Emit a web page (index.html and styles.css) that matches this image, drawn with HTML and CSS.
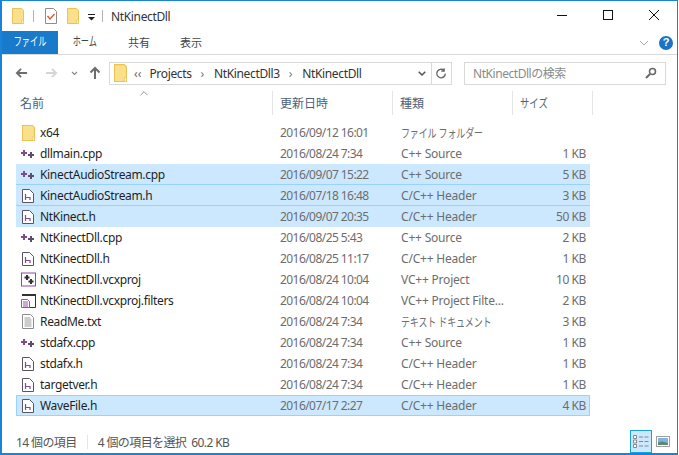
FILE: index.html
```html
<!DOCTYPE html>
<html lang="ja">
<head>
<meta charset="utf-8">
<title>NtKinectDll</title>
<link rel="stylesheet" href="styles.css">
</head>
<body>
<svg class="defs" width="0" height="0">
  <symbol id="folder" viewBox="0 0 12 16" preserveAspectRatio="none"><path d="M.5.5h9l2 2v13H.5z" fill="#fbe08c" stroke="#e8c458"/><path d="M9.500 12h2v3.500h-2z" fill="#fff3c4" stroke="#e8c458" stroke-width=".7"/></symbol>
  <symbol id="cpp" viewBox="0 0 14 10"><path d="M3 1v6M0 4h6" stroke="#7d4a94" stroke-width="2" fill="none"/><path d="M10 3v6M7 6h6" stroke="#5f4a70" stroke-width="2" fill="none"/></symbol>
  <symbol id="hdr" viewBox="0 0 12 14"><path d="M.5.500h7l4 4v9H.5z" fill="#fff" stroke="#5a5560"/><path d="M3.500 5v6M3.500 8.500h4.500v2.500" fill="none" stroke="#7d4a94" stroke-width="1.200"/></symbol>
  <symbol id="proj" viewBox="0 0 15 14"><rect x=".5" y=".5" width="14" height="13" fill="#fff" stroke="#8f4a9e"/><path d="M6 2.500v5M3.500 5h5" stroke="#333" stroke-width="2"/><path d="M10 6.500v5M7.500 9h5" stroke="#333" stroke-width="2"/></symbol>
  <symbol id="filt" viewBox="0 0 15 15"><path d="M1 1.500h13.500v13H6" fill="#fff" stroke="#333"/><path d="M1 1h14v2H1z" fill="#333"/><path d="M.5 6.500h6l2 2v6H.5z" fill="#fff" stroke="#9b4fa8"/><path d="M2 9h5M2 11h5M2 13h5" stroke="#9b4fa8"/></symbol>
  <symbol id="txt" viewBox="0 0 12 15"><path d="M.5.500h8l3 3v11H.5z" fill="#fff" stroke="#8c8c8c"/><path d="M2.500 4h6M2.500 6h7M2.500 8h7M2.500 10h7M2.500 12h7" stroke="#9a9a9a"/></symbol>
</svg>
<div class="window">
  <header class="titlebar">
    <svg class="qa-folder"><use href="#folder"/></svg>
    <span class="qa-sep first"></span>
    <svg class="qa-check" viewBox="0 0 12 16"><path d="M.5.500h8l3 3v12H.5z" fill="#fff" stroke="#8c8c8c"/><path d="M2.500 8l2.500 3 4.500-5" fill="none" stroke="#e2582a" stroke-width="1.400"/></svg>
    <svg class="qa-folder second"><use href="#folder"/></svg>
    <svg class="qa-down" viewBox="0 0 9 7"><path d="M1 .5h7" stroke="#222"/><path d="M1 3h7L4.500 6.500z" fill="#222"/></svg>
    <span class="qa-sep"></span>
    <span class="title">NtKinectDll</span>
    <span class="controls">
      <svg class="ctl" viewBox="0 0 46 20"><path d="M18 10.500h10" stroke="#111"/></svg>
      <svg class="ctl" viewBox="0 0 46 20"><rect x="18.500" y="5.500" width="9" height="9" fill="none" stroke="#111"/></svg>
      <svg class="ctl" viewBox="0 0 46 20"><path d="M18 5l10 10M28 5L18 15" stroke="#111"/></svg>
    </span>
  </header>
  <nav class="ribbon">
    <span class="tab t1 active"><span class="kana">ファイル</span></span>
    <span class="tab t2"><span class="kana">ホーム</span></span>
    <span class="tab t3">共有</span>
    <span class="tab t4">表示</span>
    <span class="ribbon-right">
      <svg class="rib-chev" viewBox="0 0 10 6"><path d="M1 1l4 4 4-4" fill="none" stroke="#a8a8a8"/></svg>
      <span class="help">?</span>
    </span>
  </nav>
  <div class="addressbar">
    <svg class="nav-btn" viewBox="0 0 14 12"><path d="M13 6H2M6.500 1.500L2 6l4.500 4.500" fill="none" stroke="#6d6d6d" stroke-width="2"/></svg>
    <svg class="nav-btn fwd" viewBox="0 0 14 12"><path d="M1 6h11M7.500 1.500L12 6l-4.500 4.500" fill="none" stroke="#d5d5d5" stroke-width="2"/></svg>
    <svg class="nav-chev" viewBox="0 0 7 5"><path d="M1 1l2.500 2.500L6 1" fill="none" stroke="#8a8a8a" stroke-width="1.200"/></svg>
    <svg class="nav-up" viewBox="0 0 12 14"><path d="M6 13V2M1.500 6.500L6 2l4.500 4.500" fill="none" stroke="#6d6d6d" stroke-width="2"/></svg>
    <div class="path">
      <svg class="path-folder"><use href="#folder"/></svg>
      <span class="crumb overflow">‹‹</span>
      <span class="crumb">Projects</span><span class="arrow">›</span>
      <span class="crumb">NtKinectDll3</span><span class="arrow">›</span>
      <span class="crumb">NtKinectDll</span>
      <span class="path-end">
        <svg class="path-chev" viewBox="0 0 8 5"><path d="M.7.700L4 4l3.300-3.300" fill="none" stroke="#555" stroke-width="1.500"/></svg>
        <svg class="refresh" viewBox="0 0 20 21"><path d="M14 10.500a4.500 4.500 0 1 1-1.500-3.300M12.800 5v3h-3" fill="none" stroke="#666" stroke-width="1.400"/></svg>
      </span>
    </div>
    <div class="search">
      <span>NtKinectDllの検索</span>
      <svg class="search-icon" viewBox="0 0 12 12"><circle cx="7.500" cy="4.500" r="3" fill="none" stroke="#666" stroke-width="1.500"/><path d="M5 7l-4 4" stroke="#666" stroke-width="2"/></svg>
    </div>
  </div>
  <div class="columns">
    <span class="col col-name">名前<svg class="sort" viewBox="0 0 9 5"><path d="M.5 4.500l4-4 4 4" fill="none" stroke="#888"/></svg></span>
    <span class="col col-date">更新日時</span>
    <span class="col col-type">種類</span>
    <span class="col col-size"><span class="kana left wide">サイズ</span></span>
  </div>
  <main class="list">
    <div class="row"><svg class="ic folder"><use href="#folder"/></svg><span class="nm">x64</span><span class="dt">2016/09/12 16:01</span><span class="ty"><span class="kana left">ファイル フォルダー</span></span><span class="sz"></span></div>
    <div class="row"><svg class="ic cpp"><use href="#cpp"/></svg><span class="nm">dllmain.cpp</span><span class="dt">2016/08/24 7:34</span><span class="ty">C++ Source</span><span class="sz">1 KB</span></div>
    <div class="row sel line"><svg class="ic cpp"><use href="#cpp"/></svg><span class="nm">KinectAudioStream.cpp</span><span class="dt">2016/09/07 15:22</span><span class="ty">C++ Source</span><span class="sz">5 KB</span></div>
    <div class="row sel line"><svg class="ic hdr"><use href="#hdr"/></svg><span class="nm">KinectAudioStream.h</span><span class="dt">2016/07/18 16:48</span><span class="ty">C/C++ Header</span><span class="sz">3 KB</span></div>
    <div class="row sel"><svg class="ic hdr"><use href="#hdr"/></svg><span class="nm">NtKinect.h</span><span class="dt">2016/09/07 20:35</span><span class="ty">C/C++ Header</span><span class="sz">50 KB</span></div>
    <div class="row"><svg class="ic cpp"><use href="#cpp"/></svg><span class="nm">NtKinectDll.cpp</span><span class="dt">2016/08/25 5:43</span><span class="ty">C++ Source</span><span class="sz">2 KB</span></div>
    <div class="row"><svg class="ic hdr"><use href="#hdr"/></svg><span class="nm">NtKinectDll.h</span><span class="dt">2016/08/25 11:17</span><span class="ty">C/C++ Header</span><span class="sz">1 KB</span></div>
    <div class="row"><svg class="ic proj"><use href="#proj"/></svg><span class="nm">NtKinectDll.vcxproj</span><span class="dt">2016/08/24 10:04</span><span class="ty">VC++ Project</span><span class="sz">10 KB</span></div>
    <div class="row"><svg class="ic proj"><use href="#filt"/></svg><span class="nm">NtKinectDll.vcxproj.filters</span><span class="dt">2016/08/24 10:04</span><span class="ty">VC++ Project Filte...</span><span class="sz">2 KB</span></div>
    <div class="row"><svg class="ic txt"><use href="#txt"/></svg><span class="nm">ReadMe.txt</span><span class="dt">2016/08/24 7:34</span><span class="ty"><span class="kana left">テキスト ドキュメント</span></span><span class="sz">3 KB</span></div>
    <div class="row"><svg class="ic cpp"><use href="#cpp"/></svg><span class="nm">stdafx.cpp</span><span class="dt">2016/08/24 7:34</span><span class="ty">C++ Source</span><span class="sz">1 KB</span></div>
    <div class="row"><svg class="ic hdr"><use href="#hdr"/></svg><span class="nm">stdafx.h</span><span class="dt">2016/08/24 7:34</span><span class="ty">C/C++ Header</span><span class="sz">1 KB</span></div>
    <div class="row"><svg class="ic hdr"><use href="#hdr"/></svg><span class="nm">targetver.h</span><span class="dt">2016/08/24 7:34</span><span class="ty">C/C++ Header</span><span class="sz">1 KB</span></div>
    <div class="row sel last"><svg class="ic hdr"><use href="#hdr"/></svg><span class="nm">WaveFile.h</span><span class="dt">2016/07/17 2:27</span><span class="ty">C/C++ Header</span><span class="sz">4 KB</span></div>
  </main>
  <footer class="status">
    <span class="st-count">14 個の項目</span>
    <span class="st-sep"></span>
    <span>4 個の項目を選択&nbsp; 60.2 KB</span>
    <span class="views">
      <span class="view on"><svg viewBox="0 0 18 15"><path d="M1.500 1.500h3v3h-3zM1.500 6h3v3h-3zM1.500 10.500h3v3h-3z" fill="#fff" stroke="#888"/><path d="M7 3h4M12.500 3h4M7 7.500h4M12.500 7.500h4M7 12h4M12.500 12h4" stroke="#888"/></svg></span>
      <span class="view"><svg viewBox="0 0 14 11"><rect x=".5" y=".5" width="13" height="10" fill="#fff" stroke="#a0a0a0"/><rect x="2" y="2" width="10" height="7" fill="#7fb4e0"/><path d="M2 9V6.500l4-1 6 1.500v2z" fill="#5c8a6e"/></svg></span>
    </span>
  </footer>
</div>
</body>
</html>
```
FILE: styles.css
```css
* { box-sizing: border-box; }
html, body { margin: 0; padding: 0; }
body {
  width: 679px;
  height: 455px;
  background: #fff;
  overflow: hidden;
  font-family: "Noto Sans", "Noto Sans CJK JP", sans-serif;
  font-size: 12px;
  color: #1a1a1a;
}
.defs { position: absolute; }
svg { display: block; flex: none; }
.kana { display: inline-block; transform: scaleX(.75); white-space: nowrap; }
.kana.left { transform-origin: left center; }
.kana.wide { transform: scaleX(.78); }
.window {
  width: 678px;
  height: 455px;
  border: 1px solid #1883d7;
  border-left-width: 2px;
  border-bottom-width: 2px;
  display: flex;
  flex-direction: column;
  background: #fff;
}
.titlebar {
  height: 30px;
  flex: none;
  display: flex;
  align-items: center;
  padding-left: 10px;
}
.qa-folder { width: 12px; height: 16px; }
.qa-folder.second { margin-left: 10px; }
.qa-sep { width: 1px; height: 12px; background: #b4b4b4; margin: 0 8px 0 6px; }
.qa-sep.first { margin-left: 9px; margin-right: 11px; }
.qa-check { width: 12px; height: 16px; }
.qa-down { width: 9px; height: 7px; margin-left: 8px; margin-top: 3px; }
.title { color: #333; letter-spacing: -.35px; }
.controls { margin-left: auto; display: flex; }
.ctl { width: 46px; height: 20px; margin-top: -3px; }
.ribbon {
  height: 24px;
  flex: none;
  display: flex;
  align-items: stretch;
  border-bottom: 1px solid #dadada;
  font-size: 11px;
  line-height: 1;
}
.tab { display: flex; align-items: center; justify-content: center; color: #444; padding-bottom: 1px; }
.tab .kana { font-size: 12px; transform: scaleX(.68); }
.t1 { width: 56px; }
.t2 { width: 54px; }
.t3 { width: 54px; }
.t4 { width: 50px; }
.tab.active { background: #1979ca; color: #fff; }
.ribbon-right { margin-left: auto; display: flex; align-items: center; gap: 10px; padding-right: 4px; }
.rib-chev { width: 10px; height: 6px; }
.help {
  width: 14px; height: 14px; border-radius: 50%;
  background: #1a74c4; color: #fff; font-weight: 700; font-size: 11px;
  display: flex; align-items: center; justify-content: center; font-family: "Liberation Sans", sans-serif;
}
.addressbar {
  height: 36px;
  flex: none;
  display: flex;
  align-items: center;
  padding-left: 13px;
}
.nav-btn { width: 13px; height: 12px; }
.nav-btn.fwd { margin-left: 17px; }
.nav-chev { width: 7px; height: 5px; margin-left: 13px; }
.nav-up { width: 12px; height: 14px; margin-left: 11px; }
.path {
  width: 343px;
  height: 23px;
  margin-left: 8px;
  border: 1px solid #d9d9d9;
  display: flex;
  align-items: center;
  padding-left: 4px;
  color: #333;
  letter-spacing: -.35px;
}
.path-folder { width: 13px; height: 18px; margin-right: 7px; }
.crumb.overflow { color: #666; margin-right: 8px; letter-spacing: 0; }
.arrow { color: #777; margin: 0 10px 0 9px; }
.path-end { margin-left: auto; display: flex; align-items: center; height: 100%; }
.path-chev { width: 8px; height: 5px; margin-right: 5px; }
.refresh {
  width: 20px;
  height: 100%;
  border-left: 1px solid #d9d9d9;
}
.search {
  width: 202px;
  height: 23px;
  margin-left: 12px;
  border: 1px solid #d9d9d9;
  display: flex;
  align-items: center;
  justify-content: space-between;
  padding: 0 8px;
  color: #8a8a8a;
  letter-spacing: -.45px;
}
.search-icon { width: 12px; height: 12px; }
.columns {
  height: 24px;
  flex: none;
  display: flex;
  align-items: stretch;
  color: #4c607a;
  padding-left: 17px;
}
.col { display: flex; align-items: center; border-right: 1px solid #e5e5e5; position: relative; padding-left: 7px; }
.col-name { width: 254px; padding-left: 1px; }
.col-date { width: 120px; }
.col-type { width: 120px; }
.col-size { width: 80px; }
.sort { position: absolute; left: 121px; top: 0; width: 8px; height: 5px; }
.list {
  flex: 1;
  padding: 7px 0 0 14px;
}
.row {
  width: 574px;
  height: 21px;
  display: grid;
  grid-template-columns: 24px 240px 121px 1fr 60px;
  align-items: center;
  color: #1f1f1f;
  letter-spacing: -.33px;
}
.row.sel { background: #cce8ff; }
.row.line { box-shadow: inset 0 -1px 0 #99d1ff; }
.row.last { box-shadow: inset 0 0 0 1px #99d1ff; }
.ic { justify-self: center; }
.ic.folder { width: 13px; height: 16px; }
.ic.cpp { width: 14px; height: 10px; }
.ic.hdr { width: 12px; height: 14px; }
.ic.proj { width: 15px; height: 15px; }
.ic.txt { width: 12px; height: 15px; }
.dt, .ty, .sz { color: #6d6d6d; }
.dt { letter-spacing: -.56px; }
.ty { letter-spacing: -.2px; }
.sz { text-align: right; padding-right: 4px; letter-spacing: -.4px; }
.status {
  height: 24px;
  flex: none;
  display: flex;
  align-items: center;
  padding: 1px 0 0 14px;
  color: #555;
  letter-spacing: -.6px;
}
.st-sep { width: 1px; height: 14px; background: #e5e5e5; margin: 0 10px; }
.views { margin-left: auto; display: flex; align-items: stretch; height: 100%; margin-right: 3px; }
.view { width: 22px; display: flex; align-items: center; justify-content: center; }
.view svg { width: 18px; height: 15px; }
.view:not(.on) svg { width: 14px; height: 11px; }
.view.on { background: #cce8ff; border: 1px solid #1a9fe0; }
```
